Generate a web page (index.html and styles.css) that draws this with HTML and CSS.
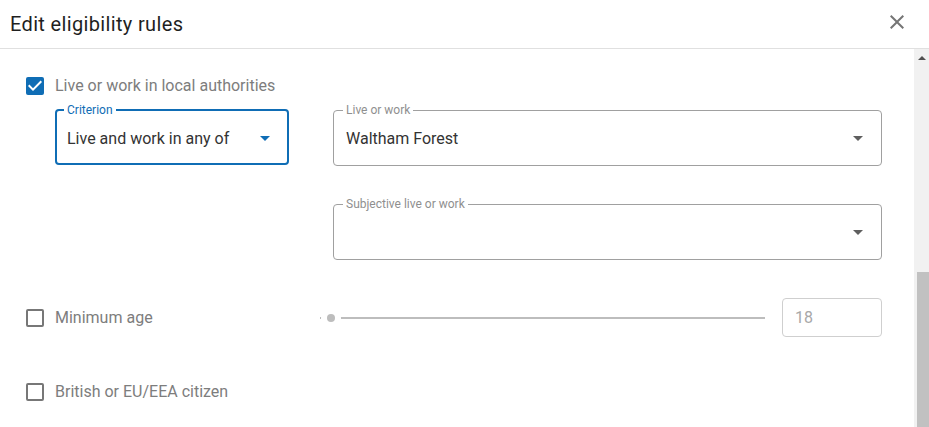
FILE: index.html
```html
<!DOCTYPE html>
<html lang="en">
<head>
    <meta charset="UTF-8">
    <meta name="viewport" content="width=device-width, initial-scale=1.0">
    <title>Edit eligibility rules</title>
    <link rel="stylesheet" href="styles.css">
</head>
<body>
    <div class="dialog">
        <div class="dialog-header">
            <h1>Edit eligibility rules</h1>
            <svg class="close-icon" viewBox="0 0 24 24"><path d="M19 6.41L17.59 5 12 10.59 6.41 5 5 6.41 10.59 12 5 17.59 6.41 19 12 13.41 17.59 19 19 17.59 13.41 12z"/></svg>
        </div>

        <div class="dialog-main">
            <div class="dialog-content">
                <div class="rule">
                    <div class="check-row">
                        <span class="checkbox checked">
                            <svg viewBox="3 3 18 18"><path d="M10 17l-5-5 1.41-1.41L10 14.17l7.59-7.59L19 8l-9 9z"/></svg>
                        </span>
                        <span class="check-label">Live or work in local authorities</span>
                    </div>
                    <div class="rule-fields">
                        <fieldset class="select focused">
                            <legend>Criterion</legend>
                            <div class="select-value">
                                <span>Live and work in any of</span>
                                <svg class="select-arrow" viewBox="0 0 24 24"><path d="M7 10l5 5 5-5z"/></svg>
                            </div>
                        </fieldset>
                        <div class="field-stack">
                            <fieldset class="select">
                                <legend>Live or work</legend>
                                <div class="select-value">
                                    <span>Waltham Forest</span>
                                    <svg class="select-arrow" viewBox="0 0 24 24"><path d="M7 10l5 5 5-5z"/></svg>
                                </div>
                            </fieldset>
                            <fieldset class="select">
                                <legend>Subjective live or work</legend>
                                <div class="select-value">
                                    <span></span>
                                    <svg class="select-arrow" viewBox="0 0 24 24"><path d="M7 10l5 5 5-5z"/></svg>
                                </div>
                            </fieldset>
                        </div>
                    </div>
                </div>

                <div class="rule rule-inline">
                    <div class="check-row wide">
                        <span class="checkbox"></span>
                        <span class="check-label">Minimum age</span>
                    </div>
                    <div class="slider">
                        <span class="slider-thumb"></span>
                    </div>
                    <input class="age-input" type="text" value="18" readonly>
                </div>

                <div class="rule rule-last">
                    <div class="check-row">
                        <span class="checkbox"></span>
                        <span class="check-label">British or EU/EEA citizen</span>
                    </div>
                </div>
            </div>

            <div class="scrollbar">
                <div class="scroll-up"><span class="scroll-arrow"></span></div>
                <div class="scroll-track"><div class="scroll-thumb"></div></div>
            </div>
        </div>
    </div>
</body>
</html>
```

FILE: styles.css
```css
html, body {
    margin: 0;
    height: 100%;
}
body {
    font-family: Roboto, "Liberation Sans", Arial, sans-serif;
    background-color: white;
    overflow: hidden;
}
.dialog {
    height: 100%;
    display: flex;
    flex-direction: column;
}
.dialog-header {
    height: 48px;
    flex: none;
    display: flex;
    align-items: center;
    justify-content: space-between;
    padding: 0 20px 0 10px;
    border-bottom: 1px solid #e0e0e0;
}
.dialog-header h1 {
    margin: 0;
    font-size: 20px;
    font-weight: 400;
    color: #1f1f1f;
    letter-spacing: 0.35px;
}
.close-icon {
    width: 24px;
    height: 24px;
    fill: #757575;
    margin-bottom: 5px;
}
.dialog-main {
    flex: 1;
    display: flex;
    min-height: 0;
}
.dialog-content {
    flex: 1;
    padding: 27px 32px 0 26px;
}
.check-row {
    display: flex;
    align-items: center;
    gap: 11px;
    height: 20px;
}
.check-row.wide {
    width: 294px;
    flex: none;
}
.check-label {
    font-size: 16px;
    line-height: 20px;
    color: #7d7d7d;
}
.checkbox {
    width: 18px;
    height: 18px;
    box-sizing: border-box;
    border: 2px solid #777;
    border-radius: 2px;
    flex: none;
}
.checkbox.checked {
    border: none;
    background-color: #0f6db5;
}
.checkbox svg {
    display: block;
    width: 18px;
    height: 18px;
    fill: white;
}
.rule-fields {
    display: grid;
    grid-template-columns: 234px 1fr;
    align-items: start;
    gap: 44px;
    margin: 7px 0 0 29px;
}
.field-stack {
    display: flex;
    flex-direction: column;
    gap: 31px;
}
.select {
    margin: 0;
    min-width: 0;
    padding: 0 11px 6px 12px;
    border: 1px solid #a0a0a0;
    border-radius: 4px;
}
.select legend {
    font-size: 12px;
    line-height: 14px;
    padding: 0 3px;
    margin-left: -3px;
    color: #8f8f8f;
}
.select-value {
    height: 42px;
    display: flex;
    align-items: center;
    justify-content: space-between;
    font-size: 16px;
    color: #333;
}
.select-arrow {
    width: 24px;
    height: 24px;
    fill: #5f5f5f;
}
.select.focused {
    border: 2px solid #0f6db5;
    padding: 0 10px 4px 10px;
}
.select.focused legend,
.select.focused .select-arrow {
    color: #0f6db5;
    fill: #0f6db5;
}
.rule-inline {
    display: flex;
    align-items: center;
    margin-top: 38px;
}
.slider {
    position: relative;
    flex: 1;
    height: 2px;
    background-color: #bdbdbd;
    margin-right: 17px;
}
.slider-thumb {
    position: absolute;
    left: 7px;
    top: -3px;
    width: 8px;
    height: 8px;
    border-radius: 50%;
    background-color: #bdbdbd;
    box-shadow: 0 0 0 6px white;
}
.age-input {
    width: 100px;
    height: 39px;
    box-sizing: border-box;
    padding: 0 12px;
    border: 1px solid #cfcfcf;
    border-radius: 4px;
    font-family: inherit;
    font-size: 16px;
    color: #a8a8a8;
    outline: none;
}
.rule-last {
    margin-top: 45px;
}
.scrollbar {
    width: 15px;
    flex: none;
    display: flex;
    flex-direction: column;
    background-color: #f1f1f1;
}
.scroll-up {
    height: 17px;
    display: flex;
    justify-content: center;
    align-items: center;
}
.scroll-arrow {
    width: 0;
    height: 0;
    border-left: 4px solid transparent;
    border-right: 4px solid transparent;
    border-bottom: 4px solid #505050;
}
.scroll-track {
    flex: 1;
    display: flex;
    flex-direction: column;
    padding-top: 206px;
}
.scroll-thumb {
    flex: 1;
    margin-left: 3px;
    background-color: #c1c1c1;
}
```
